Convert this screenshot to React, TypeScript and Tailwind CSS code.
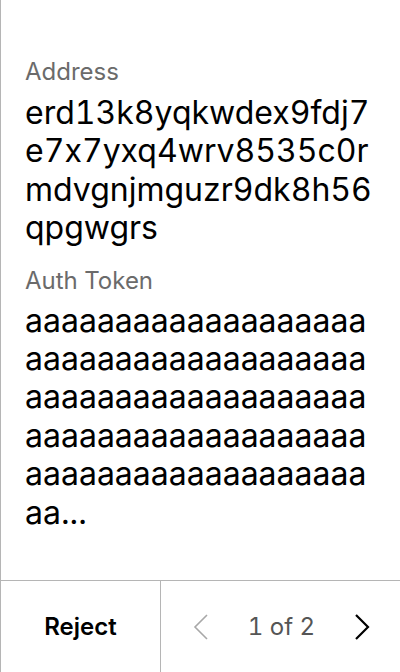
const address = 'erd13k8yqkwdex9fdj7e7x7yxq4wrv8535c0rmdvgnjmguzr9dk8h56qpgwgrs';
const token = 'a'.repeat(97) + '...';

const Chevron = ({ dir, className }: { dir: 'left' | 'right'; className: string }) => (
    <svg width="16" height="26" viewBox="0 0 16 26" fill="none" className={className}>
        <polyline
            points={dir === 'left' ? '14,1 2,13 14,25' : '2,1 14,13 2,25'}
            stroke="currentColor"
            strokeWidth={dir === 'left' ? 1.6 : 2.2}
        />
    </svg>
);

export default function App() {
    return (
        <div
            className="h-[672px] w-[400px] flex flex-col bg-white border-l border-[#b5b5b5] tabular-nums [font-feature-settings:'calt'_0,'tnum'_1]"
            style={{ fontFamily: 'Inter, "Noto Sans", sans-serif' }}>
            <div className="flex-1 flex flex-col pt-[58px] pl-[24px] pr-[28px]">
                <span className="text-[24px] leading-[28px] text-[#6b6b6b]">Address</span>
                <span className="mt-[8px] text-[32px] leading-[38.4px] text-black break-all">
                    {address}
                </span>
                <span className="mt-[19px] text-[24px] leading-[28px] text-[#6b6b6b]">Auth Token</span>
                <span className="mt-[7px] text-[32px] leading-[38.4px] text-black break-all">
                    {token}
                </span>
            </div>
            <div className="h-[92px] flex border-t border-[#b5b5b5]">
                <button className="w-[159px] flex items-center justify-center text-[24px] font-semibold text-black">
                    Reject
                </button>
                <div className="flex-1 flex items-center justify-between border-l border-[#b5b5b5] pl-[32px] pr-[30px]">
                    <Chevron dir="left" className="text-[#a8a8a8]" />
                    <span className="text-[24px] text-[#555]">1 of 2</span>
                    <Chevron dir="right" className="text-black" />
                </div>
            </div>
        </div>
    );
}
